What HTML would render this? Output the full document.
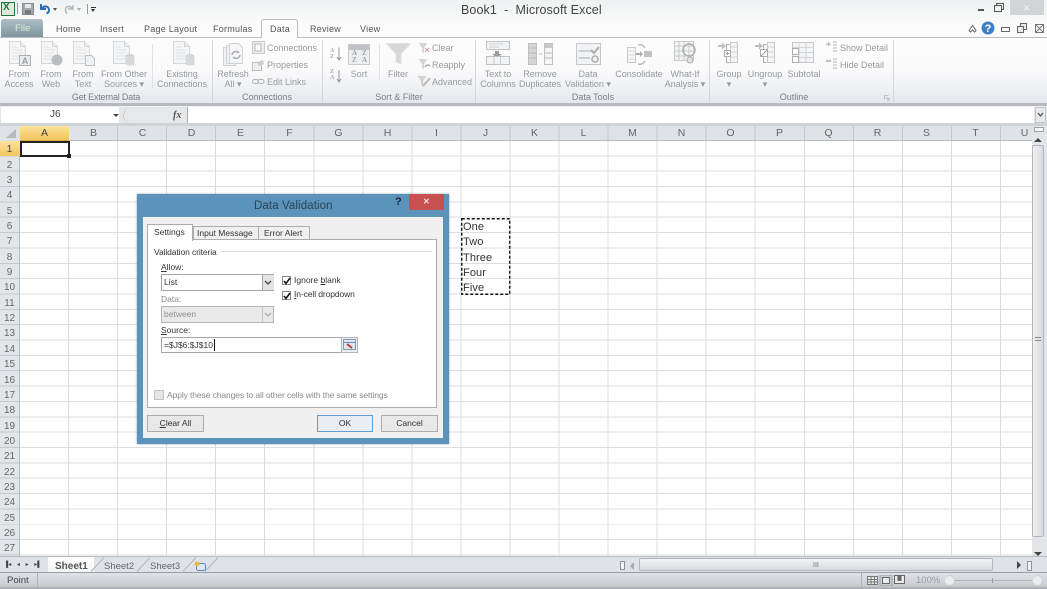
<!DOCTYPE html>
<html><head><meta charset="utf-8"><title>Book1 - Microsoft Excel</title>
<style>
html,body{margin:0;padding:0;background:#fff}
#p{position:relative;width:1047px;height:589px;overflow:hidden;font-family:"Liberation Sans",sans-serif;font-size:9px;color:#444;background:#fff;filter:blur(.35px)}
#p div,#p svg,#p span.a{position:absolute}
.t{white-space:nowrap;line-height:10px}
.c{transform:translateX(-50%);text-align:center;color:#969a9e;letter-spacing:0;white-space:nowrap;line-height:10px}
.s{color:#969a9e;letter-spacing:0;white-space:nowrap;line-height:10px}
.g{color:#7c8084;letter-spacing:0;white-space:nowrap;line-height:10px;transform:translateX(-50%)}
.tab{color:#555;font-size:9px;letter-spacing:.25px;white-space:nowrap;line-height:10px;top:24px}
.sep{top:40px;width:1px;height:62px;background:#d3d7db}
.ch{top:126px;height:15px;line-height:15px;text-align:center;color:#666;font-size:10.5px;width:49px}
.rh{left:0;width:19px;text-align:center;color:#666;font-size:10px;line-height:15px;height:15px}
.d{font-size:8.5px;color:#333;white-space:nowrap;line-height:10px;letter-spacing:0}
.btn{background:#e8e8e8;border:1px solid #acacac;box-sizing:border-box;height:17px;text-align:center;line-height:15px;font-size:8.5px;color:#333}
u{text-decoration:underline}
</style></head><body>
<div id="p">
<svg width="0" height="0" style="left:0;top:0"><defs>
<g id="doc"><path d="M1.500.5h11l5 5v17h-16z" fill="#f2f3f4" stroke="#c6c9cc"/><path d="M12.500.5v5h5" fill="#e4e6e8" stroke="#c6c9cc"/><path d="M4 6h6M4 9h10M4 12h10M4 15h10M4 18h10" stroke="#d5d8da"/></g>
</defs></svg>

<!-- title bar -->
<div style="left:0;top:0;width:1047px;height:38px;background:linear-gradient(#eff1f2,#fbfbfb 60%,#fdfdfd)"></div>
<div style="left:1px;top:2px;width:12px;height:12px;background:#dfe9dc;border:1px solid #1f7a3f"></div>
<div class="t" style="left:3px;top:3px;font-size:10px;font-weight:bold;color:#20743c">X</div>
<div style="left:17px;top:3px;width:1px;height:11px;background:#9a9a9a"></div>
<svg style="left:22px;top:3px" width="12" height="12"><rect x=".5" y=".5" width="11" height="11" fill="#a4a8ad" stroke="#85898e"/><rect x="3" y="1" width="6" height="4" fill="#e6e8ea"/><rect x="3" y="7" width="6" height="4" fill="#777"/></svg>
<svg style="left:39px;top:2px" width="12" height="13"><path d="M2 2v5h5M2.500 7C5 3 10 4 10 8c0 2-1 3-2.500 3.500" fill="none" stroke="#2f6db2" stroke-width="2"/></svg>
<div style="left:53px;top:8px;border:2.500px solid transparent;border-top:3px solid #555;border-bottom:0"></div>
<svg style="left:63px;top:2px" width="12" height="13"><path d="M10 3v4H5M9.500 7C7 3 2.500 4 2.500 8c0 1.500 1 3 2 3.500" fill="none" stroke="#b3b8bd" stroke-width="1.500"/></svg>
<div style="left:77px;top:8px;border:2.500px solid transparent;border-top:3px solid #aaa;border-bottom:0"></div>
<div style="left:87px;top:4px;width:1px;height:10px;background:#9a9a9a"></div>
<div style="left:91px;top:7px;width:5px;height:1px;background:#333"></div>
<div style="left:91px;top:9px;border:2.500px solid transparent;border-top:3px solid #333;border-bottom:0"></div>
<div class="t" style="left:461px;top:3px;font-size:12.500px;line-height:15px;color:#444;letter-spacing:.1px">Book1 &nbsp;-&nbsp; Microsoft Excel</div>
<div style="left:978px;top:9px;width:6px;height:2px;background:#555"></div>
<svg style="left:994px;top:3px" width="10" height="9"><path d="M2.500 2V.5h7v6H8M.5 2.500h7v6h-7z" fill="none" stroke="#555"/></svg>
<div style="left:1010px;top:0;width:34px;height:15px;background:#d2d4d6"></div>
<div class="t" style="left:1023px;top:3px;color:#f2f2f2;font-size:9px">✕</div>
<svg style="left:968px;top:24px" width="9" height="9"><path d="M1 6.500 4.500 1.500 8 6.500 6.500 8 4.500 6 2.500 8z" fill="#fff" stroke="#666"/></svg>
<svg style="left:981px;top:21px" width="14" height="14"><circle cx="7" cy="7" r="6.500" fill="#3f7fc6"/><text x="7" y="11" text-anchor="middle" font-size="11" font-weight="bold" fill="#fff" font-family="Liberation Sans">?</text></svg>
<div style="left:1001px;top:27px;width:7px;height:3px;border:1px solid #666"></div>
<svg style="left:1017px;top:23px" width="10" height="10"><path d="M3.500 3V.5h6v6H7M.5 3.500h6v6h-6z" fill="#e8eaec" stroke="#666"/></svg>
<svg style="left:1035px;top:24px" width="9" height="9"><path d="M.5.500h8v8h-8zM.5.500l8 8M8.500.5l-8 8" fill="none" stroke="#777"/></svg>

<!-- tabs -->
<div style="left:1px;top:19px;width:42px;height:18px;background:linear-gradient(#aebec6,#7f959f);border-radius:3px 3px 0 0"></div>
<div class="t" style="left:15px;top:24px;color:#dcefd0;font-size:9.500px">File</div>
<div class="tab" style="left:56px">Home</div>
<div class="tab" style="left:100px">Insert</div>
<div class="tab" style="left:144px">Page Layout</div>
<div class="tab" style="left:213px">Formulas</div>
<div style="left:0;top:37px;width:1047px;height:1px;background:#b9bdc1"></div>
<div style="left:261px;top:19px;width:37px;height:19px;box-sizing:border-box;background:#fdfdfd;border:1px solid #b9bdc1;border-bottom:0;border-radius:3px 3px 0 0"></div>
<div class="tab" style="left:270px">Data</div>
<div class="tab" style="left:310px">Review</div>
<div class="tab" style="left:360px">View</div>

<!-- ribbon -->
<div style="left:0;top:38px;width:1047px;height:65px;background:linear-gradient(#fdfdfd,#fafafb 50%,#e5e8eb)"></div>
<div style="left:0;top:103px;width:1047px;height:3px;background:#b6babe"></div>
<div style="left:0;top:106px;width:1047px;height:1px;background:#eef0f1"></div>
<div class="sep" style="left:212px"></div><div class="sep" style="left:322px"></div><div class="sep" style="left:475px"></div><div class="sep" style="left:709px"></div><div class="sep" style="left:893px"></div>
<div style="left:152px;top:44px;width:1px;height:44px;background:#e0e2e5"></div>
<div style="left:379px;top:44px;width:1px;height:36px;background:#e0e2e5"></div>

<div style="left:0;top:0;width:1047px;height:104px;opacity:.72">
<!-- Get external data icons -->
<svg style="left:8px;top:41px" width="24" height="26"><use href="#doc"/><rect x="11.500" y="14.500" width="11" height="10" fill="#e4e6e8" stroke="#8d9196"/><text x="17" y="23" text-anchor="middle" font-size="9" font-weight="bold" fill="#7d8287" font-family="Liberation Sans">A</text></svg>
<svg style="left:40px;top:41px" width="24" height="26"><use href="#doc"/><circle cx="17" cy="19" r="5.500" fill="#a4a7aa"/></svg>
<svg style="left:72px;top:41px" width="24" height="26"><use href="#doc"/><path d="M13.500 14.500h6l3 3v7h-9z" fill="#eceef0" stroke="#a4a7aa"/></svg>
<svg style="left:112px;top:41px" width="24" height="26"><use href="#doc"/><ellipse cx="18" cy="15" rx="4.500" ry="2" fill="#c3c6c9"/><path d="M13.500 15v8c0 2 9 2 9 0v-8" fill="#c9ccd0"/></svg>
<svg style="left:172px;top:41px" width="24" height="26"><use href="#doc"/><ellipse cx="18" cy="15" rx="4.500" ry="2" fill="#c3c6c9"/><path d="M13.500 15v8c0 2 9 2 9 0v-8" fill="#c9ccd0"/></svg>
<!-- connections -->
<svg style="left:222px;top:43px" width="24" height="24"><path d="M1.500 4.500h12v18h-12z" fill="#eeeff1" stroke="#bfc2c5"/><path d="M4.500 2.500h12v18h-12z" fill="#eeeff1" stroke="#bfc2c5"/><path d="M7.500.5h9l4 4v16h-13z" fill="#f4f5f6" stroke="#bfc2c5"/><path d="M10 12a4 4 0 0 1 7-2M18 12a4 4 0 0 1-7 2" fill="none" stroke="#8d9196" stroke-width="1.500"/></svg>
<svg style="left:252px;top:41px" width="13" height="13"><rect x=".5" y=".5" width="12" height="12" fill="#e9ebed" stroke="#b3b6ba"/><rect x="3" y="3" width="6" height="7" fill="#fff" stroke="#999"/></svg>
<svg style="left:252px;top:59px" width="13" height="12"><rect x=".5" y="3.500" width="9" height="8" fill="#e9ebed" stroke="#a4a7aa"/><path d="M5 3 11 1l1 4-5 2z" fill="#bbb"/></svg>
<svg style="left:252px;top:78px" width="13" height="7"><rect x=".5" y="1.500" width="6" height="4" rx="2" fill="none" stroke="#999"/><rect x="6" y="1.500" width="6" height="4" rx="2" fill="none" stroke="#999"/></svg>
<!-- sort -->
<div class="t" style="left:330px;top:48px;font:bold 6px/6px 'Liberation Serif',serif;color:#8a8e92">A<br>Z</div>
<div class="t" style="left:330px;top:69px;font:bold 6px/6px 'Liberation Serif',serif;color:#8a8e92">Z<br>A</div>
<svg style="left:336px;top:47px" width="6" height="38"><path d="M3 .5v12M1 10l2 3 2-3M3 23v12M1 32l2 3 2-3" fill="none" stroke="#6c7075"/></svg>
<div style="left:348px;top:44px;width:22px;height:21px;background:#e8eaec;border:1px solid #b5b8bb;box-sizing:border-box"></div>
<div style="left:349px;top:45px;width:20px;height:5px;background:#a9adb1"></div>
<div class="t" style="left:352px;top:50px;font:bold 7px/7px 'Liberation Serif',serif;color:#7e8287">A<br>Z</div>
<div class="t" style="left:362px;top:50px;font:bold 7px/7px 'Liberation Serif',serif;color:#7e8287">Z<br>A</div>
<svg style="left:386px;top:43px" width="25" height="22"><path d="M.5.500h24L15 11v10l-5-2v-8z" fill="#c8cbce" stroke="#d6d8da"/></svg>
<svg style="left:418px;top:42px" width="12" height="12"><path d="M.5 1h9L6 6v5L4 10V6z" fill="#c4c7ca"/><path d="M7 6l4 4M11 6l-4 4" stroke="#b98080"/></svg>
<svg style="left:418px;top:58px" width="13" height="13"><path d="M.5 1h9L6 6v5L4 10V6z" fill="#c4c7ca"/><path d="M7 9a3 3 0 0 1 5-1" fill="none" stroke="#7fa07f" stroke-width="1.500"/></svg>
<svg style="left:417px;top:75px" width="15" height="13"><path d="M.5 1h9L6 6v5L4 10V6z" fill="#c4c7ca"/><path d="M6 11 13 3" stroke="#a8a88c" stroke-width="2"/></svg>
<!-- data tools -->
<svg style="left:486px;top:41px" width="26" height="24"><rect x=".5" y=".5" width="23" height="8" fill="#eef0f1" stroke="#a9adb1"/><path d="M3 3h14M3 6h10" stroke="#b9bcbf"/><path d="M9 10h4v3h3l-5 4-5-4h3z" fill="#75797e"/><rect x=".5" y="15.500" width="23" height="8" fill="#eef0f1" stroke="#a9adb1"/><path d="M14.500 16v7M8 16v7" stroke="#b9bcbf"/></svg>
<svg style="left:528px;top:43px" width="26" height="22"><rect x=".5" y=".5" width="8" height="21" fill="#c5c8cb" stroke="#a9adb1"/><rect x="16.500" y=".5" width="8" height="21" fill="#f4f5f6" stroke="#a9adb1"/><rect x="17" y="1" width="7" height="4" fill="#b4b7ba"/><path d="M.5 5h8M.5 10h8M.5 15h8M16.500 10h8M16.500 15h8" stroke="#9ea2a6"/><path d="M11 11h3" stroke="#9ea2a6"/></svg>
<svg style="left:576px;top:43px" width="25" height="22"><rect x=".5" y=".5" width="24" height="21" fill="#eef0f1" stroke="#b0b3b7"/><path d="M3 8h13M3 15h11" stroke="#a9adb1" stroke-width="1.500"/><path d="M15 7l3 3 5-6" fill="none" stroke="#8b8f93" stroke-width="2"/><circle cx="19" cy="16" r="3" fill="none" stroke="#8b8f93" stroke-width="1.500"/></svg>
<svg style="left:627px;top:43px" width="26" height="22"><path d="M.5 4.500h8v15h-8z" fill="#f4f5f6" stroke="#b3b6ba"/><path d="M.5 8h8M.5 12h8M.5 16h8" stroke="#c9ccd0"/><path d="M9 10h4V8l3 3-3 3v-2H9z" fill="#8d9196"/><rect x="17" y="8" width="8" height="6" fill="#a9adb1"/><path d="M11 2c3-1 5 0 7 3M11 21c3 1 5 0 7-3" fill="none" stroke="#9ea2a6" stroke-width="1.500"/></svg>
<svg style="left:674px;top:41px" width="24" height="24"><rect x=".5" y=".5" width="19" height="19" fill="#f0f1f2" stroke="#b6b9bc"/><path d="M.5 5h19M.5 10h19M.5 15h19M5 .5v19M10 .5v19M15 .5v19" stroke="#b6b9bc"/><circle cx="15" cy="9" r="6" fill="none" stroke="#909498" stroke-width="1.500"/><circle cx="16" cy="19" r="3" fill="#d8dadc" stroke="#909498"/></svg>
<!-- outline -->
<svg style="left:717px;top:42px" width="25" height="22"><path d="M1 3h4V.5L9 4 5 7.500V5H1z" fill="#a5a8ab"/><path d="M12.500 2.500h-3v18h3" fill="none" stroke="#8f9397"/><rect x="13.500" y=".5" width="7" height="20" fill="#f2f3f4" stroke="#b0b3b7"/><path d="M13.500 5h7M13.500 10h7M13.500 15h7" stroke="#c3c6c9"/><rect x="7.500" y="8.500" width="6" height="6" fill="#fff" stroke="#8f9397"/><path d="M9 11.500h3M10.500 10v3" stroke="#777"/></svg>
<svg style="left:754px;top:42px" width="25" height="22"><path d="M1 3h4V.5L9 4 5 7.500V5H1z" fill="#a5a8ab"/><path d="M12.500 2.500h-3v18h3" fill="none" stroke="#8f9397"/><rect x="13.500" y=".5" width="7" height="20" fill="#f2f3f4" stroke="#b0b3b7"/><path d="M13.500 5h7M13.500 10h7M13.500 15h7" stroke="#c3c6c9"/><rect x="6.500" y="7.500" width="7" height="7" fill="#fff" stroke="#8f9397"/><path d="M7 14l6-6" stroke="#777"/></svg>
<svg style="left:791px;top:42px" width="25" height="22"><rect x="1.500" y=".5" width="21" height="20" fill="#f2f3f4" stroke="#b0b3b7"/><path d="M1.500 5.500h21M1.500 10.500h21M1.500 15.500h21M8 .5v20M15 .5v20" stroke="#c3c6c9"/><rect x="1.500" y="6.500" width="6" height="6" fill="#fff" stroke="#8f9397"/><rect x="1.500" y="14.500" width="6" height="6" fill="#fff" stroke="#8f9397"/></svg>
<svg style="left:825px;top:41px" width="13" height="12"><path d="M1 2.500h2V.5L6 3 3 5.500V4H1z" fill="#a5a8ab"/><path d="M8 1h4M8 4h4M8 7h4M8 10h4" stroke="#9a9ea2"/></svg>
<svg style="left:825px;top:58px" width="13" height="13"><path d="M1 3h5" stroke="#a5a8ab" stroke-width="2"/><path d="M8 1h4M8 4h4M8 7h4M8 10h4" stroke="#9a9ea2"/></svg>
<svg style="left:884px;top:95px" width="6" height="6"><path d="M.5 .5h4M.5.500v4M2 2l3 3M5 3v2H3" fill="none" stroke="#aeb1b4"/></svg>
</div>

<!-- ribbon labels -->
<div class="c" style="left:19px;top:69px">From<br>Access</div>
<div class="c" style="left:51px;top:69px">From<br>Web</div>
<div class="c" style="left:83px;top:69px">From<br>Text</div>
<div class="c" style="left:124px;top:69px">From Other<br>Sources ▾</div>
<div class="c" style="left:182px;top:69px">Existing<br>Connections</div>
<div class="c" style="left:233px;top:69px">Refresh<br>All ▾</div>
<div class="s" style="left:267px;top:43px">Connections</div>
<div class="s" style="left:267px;top:60px">Properties</div>
<div class="s" style="left:267px;top:77px">Edit Links</div>
<div class="c" style="left:359px;top:69px">Sort</div>
<div class="c" style="left:398px;top:69px">Filter</div>
<div class="s" style="left:432px;top:43px">Clear</div>
<div class="s" style="left:432px;top:60px">Reapply</div>
<div class="s" style="left:432px;top:77px">Advanced</div>
<div class="c" style="left:498px;top:69px">Text to<br>Columns</div>
<div class="c" style="left:540px;top:69px">Remove<br>Duplicates</div>
<div class="c" style="left:588px;top:69px">Data<br>Validation ▾</div>
<div class="c" style="left:639px;top:69px">Consolidate</div>
<div class="c" style="left:685px;top:69px">What-If<br>Analysis ▾</div>
<div class="c" style="left:729px;top:69px">Group<br>▾</div>
<div class="c" style="left:765px;top:69px">Ungroup<br>▾</div>
<div class="c" style="left:804px;top:69px">Subtotal</div>
<div class="s" style="left:840px;top:43px">Show Detail</div>
<div class="s" style="left:840px;top:60px">Hide Detail</div>
<div class="g" style="left:106px;top:92px;letter-spacing:-.2px">Get External Data</div>
<div class="g" style="left:267px;top:92px">Connections</div>
<div class="g" style="left:399px;top:92px">Sort &amp; Filter</div>
<div class="g" style="left:593px;top:92px">Data Tools</div>
<div class="g" style="left:794px;top:92px">Outline</div>

<!-- formula bar -->
<div style="left:0;top:107px;width:1047px;height:18px;background:#e3e6e9"></div>
<div style="left:1px;top:107px;width:118px;height:16px;background:#fff"></div>
<div class="t" style="left:50px;top:110px;font-size:10px;color:#444">J6</div>
<div style="left:113px;top:114px;border:3px solid transparent;border-top:3px solid #444;border-bottom:0"></div>
<div style="left:123px;top:108px;width:64px;height:15px;background:#e6e8ea;border-radius:8px 0 0 8px;border-left:1px solid #c5c8cb;box-sizing:border-box"></div>
<div class="t" style="left:173px;top:110px;font:italic bold 10px/11px 'Liberation Serif',serif;color:#555">fx</div>
<div style="left:187px;top:107px;width:1px;height:16px;background:#a9adb1"></div>
<div style="left:188px;top:107px;width:846px;height:16px;background:#fff"></div>
<div style="left:1035px;top:107px;width:11px;height:16px;background:#e6e8ea;border:1px solid #c5c8cb;box-sizing:border-box"></div>
<svg style="left:1037px;top:112px" width="7" height="6"><path d="M1 1l2.500 3L6 1" fill="none" stroke="#555" stroke-width="1.300"/></svg>
<div style="left:0;top:123px;width:1047px;height:3px;background:#d0d3d6"></div>

<!-- sheet grid -->
<div style="left:20px;top:141px;width:1012px;height:414.500px;background-color:#fff;background-image:repeating-linear-gradient(90deg,transparent 0,transparent 48.050px,#dcdddf 48.050px,#dcdddf 49.050px),repeating-linear-gradient(180deg,transparent 0,transparent 14.350px,#dcdddf 14.350px,#dcdddf 15.350px)"></div>
<div style="left:0;top:126px;width:1032px;height:15px;background:#dfe2e6;border-bottom:1px solid #b8bbbf;box-sizing:border-box;background-image:repeating-linear-gradient(90deg,transparent 0,transparent 48.050px,#c5c8cc 48.050px,#c5c8cc 49.050px);background-position:20px 0"></div>
<div style="left:0;top:126px;width:20px;height:15px;background:#dfe2e6"></div>
<svg style="left:6px;top:129px" width="11" height="10"><path d="M10 0v9H0z" fill="#b5b9bd"/></svg>
<div style="left:0;top:141px;width:20px;height:414.500px;background-color:#e3e6e9;background-image:repeating-linear-gradient(180deg,transparent 0,transparent 14.350px,#c5c8cc 14.350px,#c5c8cc 15.350px);border-right:1px solid #b8bbbf;box-sizing:border-box"></div>
<div class="ch" style="left:20px;background:linear-gradient(#fbe29c,#f4c55e);border-bottom:1px solid #d9a93b;box-sizing:border-box;line-height:14px;color:#444">A</div>
<div class="ch" style="left:69px">B</div><div class="ch" style="left:118px">C</div><div class="ch" style="left:167px">D</div><div class="ch" style="left:216px">E</div><div class="ch" style="left:265px">F</div><div class="ch" style="left:314px">G</div><div class="ch" style="left:363px">H</div><div class="ch" style="left:412px">I</div><div class="ch" style="left:461px">J</div><div class="ch" style="left:510px">K</div><div class="ch" style="left:559px">L</div><div class="ch" style="left:608px">M</div><div class="ch" style="left:657px">N</div><div class="ch" style="left:706px">O</div><div class="ch" style="left:755px">P</div><div class="ch" style="left:804px">Q</div><div class="ch" style="left:853px">R</div><div class="ch" style="left:902px">S</div><div class="ch" style="left:951px">T</div><div class="ch" style="left:1000px">U</div>
<div style="left:0;top:141px;width:20px;height:15px;background:linear-gradient(#fbe29c,#f4c55e)"></div>
<div class="rh" style="top:142px;color:#444">1</div><div class="rh" style="top:158px">2</div><div class="rh" style="top:173px">3</div><div class="rh" style="top:188px">4</div><div class="rh" style="top:204px">5</div><div class="rh" style="top:219px">6</div><div class="rh" style="top:234px">7</div><div class="rh" style="top:250px">8</div><div class="rh" style="top:265px">9</div><div class="rh" style="top:280px">10</div><div class="rh" style="top:296px">11</div><div class="rh" style="top:311px">12</div><div class="rh" style="top:326px">13</div><div class="rh" style="top:342px">14</div><div class="rh" style="top:357px">15</div><div class="rh" style="top:373px">16</div><div class="rh" style="top:388px">17</div><div class="rh" style="top:403px">18</div><div class="rh" style="top:419px">19</div><div class="rh" style="top:434px">20</div><div class="rh" style="top:449px">21</div><div class="rh" style="top:465px">22</div><div class="rh" style="top:480px">23</div><div class="rh" style="top:495px">24</div><div class="rh" style="top:511px">25</div><div class="rh" style="top:526px">26</div><div class="rh" style="top:541px">27</div>
<!-- selected cell -->
<div style="left:20px;top:141px;width:50px;height:16px;border:2px solid #222;box-sizing:border-box"></div>
<div style="left:67px;top:154px;width:4px;height:4px;background:#222"></div>

<!-- marching ants + list -->
<svg style="left:460px;top:217px" width="52" height="79"><rect x="1.750" y="1.750" width="48" height="75.500" fill="none" stroke="#111" stroke-width="1.400" stroke-dasharray="3 2"/></svg>
<div class="t" style="left:463px;top:220px;font-size:11px;line-height:15.350px;color:#333;letter-spacing:.1px">One<br>Two<br>Three<br>Four<br>Five</div>

<!-- vertical scrollbar -->
<div style="left:1032px;top:126px;width:15px;height:434px;background:#e3e6e9"></div>
<div style="left:1034px;top:127px;width:10px;height:5px;background:#f4f5f6;border:1px solid #9ea2a6;box-sizing:border-box"></div>
<div style="left:1034px;top:138px;border:4px solid transparent;border-bottom:4px solid #444;border-top:0"></div>
<div style="left:1032px;top:145px;width:12px;height:392px;background:linear-gradient(90deg,#eef0f2,#d8dbde);border:1px solid #b3b6ba;box-sizing:border-box;border-radius:2px"></div>
<div style="left:1035px;top:337px;width:6px;height:4px;border-top:1px solid #888;border-bottom:1px solid #888;box-sizing:border-box"></div>
<div style="left:1034px;top:552px;border:4px solid transparent;border-top:4px solid #444;border-bottom:0"></div>

<!-- sheet tabs -->
<div style="left:0;top:556px;width:1047px;height:16px;background:#dfe3e7;border-top:1px solid #b8bbbf;box-sizing:border-box"></div>
<div class="t" style="left:4px;top:562px;font-size:6px;line-height:7px;color:#444;word-spacing:4px">▐◂ ◂ ▸ ▸▌</div>
<div style="left:48px;top:557px;width:46px;height:15px;background:linear-gradient(#fff,#f2f4f6)"></div>
<div class="t" style="left:55px;top:562px;font:bold 10px/10px 'Liberation Sans',sans-serif;color:#555">Sheet1</div>
<svg style="left:90px;top:557px" width="130" height="15"><path d="M14 .5 1 14.500M60 .5 47 14.500M106 .5 93 14.500M128 .5 115 14.500" stroke="#b2b5b9" fill="none"/></svg>
<div class="t" style="left:104px;top:562px;font-size:9.500px;color:#666">Sheet2</div>
<div class="t" style="left:150px;top:562px;font-size:9.500px;color:#666">Sheet3</div>
<svg style="left:194px;top:561px" width="13" height="11"><rect x="2.500" y="2.500" width="9" height="7" rx="2" fill="#dce7f2" stroke="#5b85b5"/><circle cx="3" cy="3" r="2.500" fill="#f0b93a"/></svg>
<div style="left:620px;top:561px;width:5px;height:9px;border:1px solid #8f9397;box-sizing:border-box;background:#f2f3f4"></div>
<div style="left:630px;top:562px;border:4px solid transparent;border-right:4px solid #aaa;border-left:0"></div>
<div style="left:639px;top:558px;width:354px;height:13px;background:linear-gradient(#f0f2f4,#d8dbdf);border:1px solid #b3b6ba;box-sizing:border-box;border-radius:2px"></div>
<div class="t" style="left:813px;top:561px;font-size:7px;color:#777">III</div>
<div style="left:1017px;top:561px;border:4.500px solid transparent;border-left:4.500px solid #444;border-right:0"></div>
<div style="left:1027px;top:561px;width:5px;height:10px;border:1px solid #8f9397;box-sizing:border-box;background:#f2f3f4"></div>

<!-- status bar -->
<div style="left:0;top:572px;width:1047px;height:17px;background:linear-gradient(#dfe2e6,#c9ccd1 80%,#9fa7ae);border-top:1px solid #9a9ea2;box-sizing:border-box"></div>
<div class="t" style="left:7px;top:576px;font-size:9.500px;color:#444">Point</div>
<div style="left:37px;top:573px;width:1px;height:15px;background:#aeb1b5"></div>
<div style="left:861px;top:573px;width:1px;height:15px;background:#aeb1b5"></div>
<svg style="left:867px;top:575px" width="40" height="11"><rect x=".5" y="1.500" width="10" height="8" fill="#e8e9eb" stroke="#777"/><path d="M.5 4.500h10M.5 7h10M4 1.500v8M7.500 1.500v8" stroke="#777"/><rect x="13" y="0" width="12" height="11" fill="#c9ccd1" stroke="#9ea2a6"/><rect x="15.500" y="2.500" width="7" height="6" fill="#e8e9eb" stroke="#666"/><rect x="27.500" y=".5" width="10" height="8" fill="#e8e9eb" stroke="#666"/><path d="M31 .5v5h3v-5" fill="#666" stroke="#666"/></svg>
<div class="t" style="left:916px;top:576px;font-size:9.500px;color:#9a9ea2">100%</div>
<div style="left:944px;top:575px;width:11px;height:11px;background:#e9ebed;border-radius:50%;border:1px solid #d0d3d6;box-sizing:border-box"></div>
<div style="left:955px;top:580px;width:79px;height:1px;background:#b3b6ba"></div>
<div style="left:992px;top:578px;width:1px;height:5px;background:#9a9ea2"></div>
<div style="left:1032px;top:575px;width:11px;height:11px;background:#e9ebed;border-radius:50%;border:1px solid #d0d3d6;box-sizing:border-box"></div>

<!-- dialog -->
<div style="left:137px;top:194px;width:312px;height:250px;background:#5b93ba;box-shadow:0 0 2px rgba(60,90,110,.6)"></div>
<div style="left:409px;top:194px;width:35px;height:16px;background:#c75050"></div>
<div class="t" style="left:423px;top:197px;color:#f4e4e4;font-size:8px;font-weight:bold">✕</div>
<div class="t" style="left:395px;top:197px;color:#223;font-size:11px;font-weight:bold">?</div>
<div class="t" style="left:254px;top:199px;font-size:11.500px;line-height:14px;color:#2b4456;letter-spacing:.1px">Data Validation</div>
<div style="left:143px;top:217px;width:300px;height:221px;background:#f0f0f0"></div>
<div style="left:147px;top:239px;width:290px;height:169px;background:#fff;border:1px solid #adadad;box-sizing:border-box"></div>
<div style="left:147px;top:224px;width:46px;height:17px;background:#fff;border:1px solid #adadad;border-bottom:0;box-sizing:border-box"></div>
<div style="left:193px;top:226px;width:66px;height:14px;background:#f0f0f0;border:1px solid #adadad;box-sizing:border-box"></div>
<div style="left:259px;top:226px;width:51px;height:14px;background:#f0f0f0;border:1px solid #adadad;border-left:0;box-sizing:border-box"></div>
<div class="d" style="left:154px;top:227px">Settings</div>
<div class="d" style="left:197px;top:228px">Input Message</div>
<div class="d" style="left:264px;top:228px">Error Alert</div>
<div class="d" style="left:154px;top:247px;letter-spacing:-.1px">Validation criteria</div>
<div style="left:221px;top:251px;width:211px;height:1px;background:#dcdcdc"></div>
<div class="d" style="left:161px;top:262px"><u>A</u>llow:</div>
<div style="left:161px;top:274px;width:113px;height:17px;background:#fff;border:1px solid #a5a5a5;box-sizing:border-box"></div>
<div style="left:262px;top:275px;width:11px;height:15px;background:#e4e4e4;border-left:1px solid #a5a5a5"></div>
<svg style="left:264px;top:280px" width="8" height="6"><path d="M1 1l3 3 3-3" fill="none" stroke="#444" stroke-width="1.300"/></svg>
<div class="d" style="left:164px;top:277px">List</div>
<div style="left:282px;top:276px;width:9px;height:9px;background:#fff;border:1px solid #888;box-sizing:border-box"></div>
<svg style="left:282px;top:276px" width="10" height="10"><path d="M2 5l2 2.500L8 2" fill="none" stroke="#111" stroke-width="1.500"/></svg>
<div class="d" style="left:294px;top:275px">Ignore <u>b</u>lank</div>
<div style="left:282px;top:291px;width:9px;height:9px;background:#fff;border:1px solid #888;box-sizing:border-box"></div>
<svg style="left:282px;top:291px" width="10" height="10"><path d="M2 5l2 2.500L8 2" fill="none" stroke="#111" stroke-width="1.500"/></svg>
<div class="d" style="left:294px;top:289px;letter-spacing:-.1px"><u>I</u>n-cell dropdown</div>
<div class="d" style="left:161px;top:294px;color:#8a8a8a">Data:</div>
<div style="left:161px;top:306px;width:113px;height:17px;background:#e9e9e9;border:1px solid #b5b5b5;box-sizing:border-box"></div>
<div style="left:262px;top:307px;width:1px;height:15px;background:#c5c5c5"></div>
<svg style="left:264px;top:312px" width="8" height="6"><path d="M1 1l3 3 3-3" fill="none" stroke="#aaa" stroke-width="1.300"/></svg>
<div class="d" style="left:164px;top:309px;color:#8f8f8f">between</div>
<div class="d" style="left:161px;top:325px"><u>S</u>ource:</div>
<div style="left:161px;top:337px;width:181px;height:16px;background:#fff;border:1px solid #a5a5a5;box-sizing:border-box"></div>
<div class="d" style="left:164px;top:340px">=$J$6:$J$10</div>
<div style="left:214px;top:339px;width:1px;height:12px;background:#111"></div>
<div style="left:341px;top:337px;width:17px;height:16px;background:#eeeeee;border:1px solid #b5b5b5;box-sizing:border-box"></div>
<svg style="left:343px;top:339px" width="13" height="12"><rect x=".5" y=".5" width="12" height="10" fill="#dfe8f2" stroke="#7f9bb8"/><path d="M.5 3.500h12" stroke="#6a8bb0"/><path d="M4 5l5 4" stroke="#c23b3b" stroke-width="2"/></svg>
<div style="left:154px;top:390px;width:10px;height:10px;background:#e6e6e6;border:1px solid #c4c4c4;box-sizing:border-box"></div>
<div class="d" style="left:167px;top:390px;color:#8a8a8a;letter-spacing:-.1px">Apply these changes to all other cells with the same settings</div>
<div class="btn" style="left:147px;top:415px;width:57px"><u>C</u>lear All</div>
<div class="btn" style="left:317px;top:415px;width:56px;border-color:#5f9ed6;background:#eaeef2">OK</div>
<div class="btn" style="left:381px;top:415px;width:57px">Cancel</div>
</div>
</body></html>
